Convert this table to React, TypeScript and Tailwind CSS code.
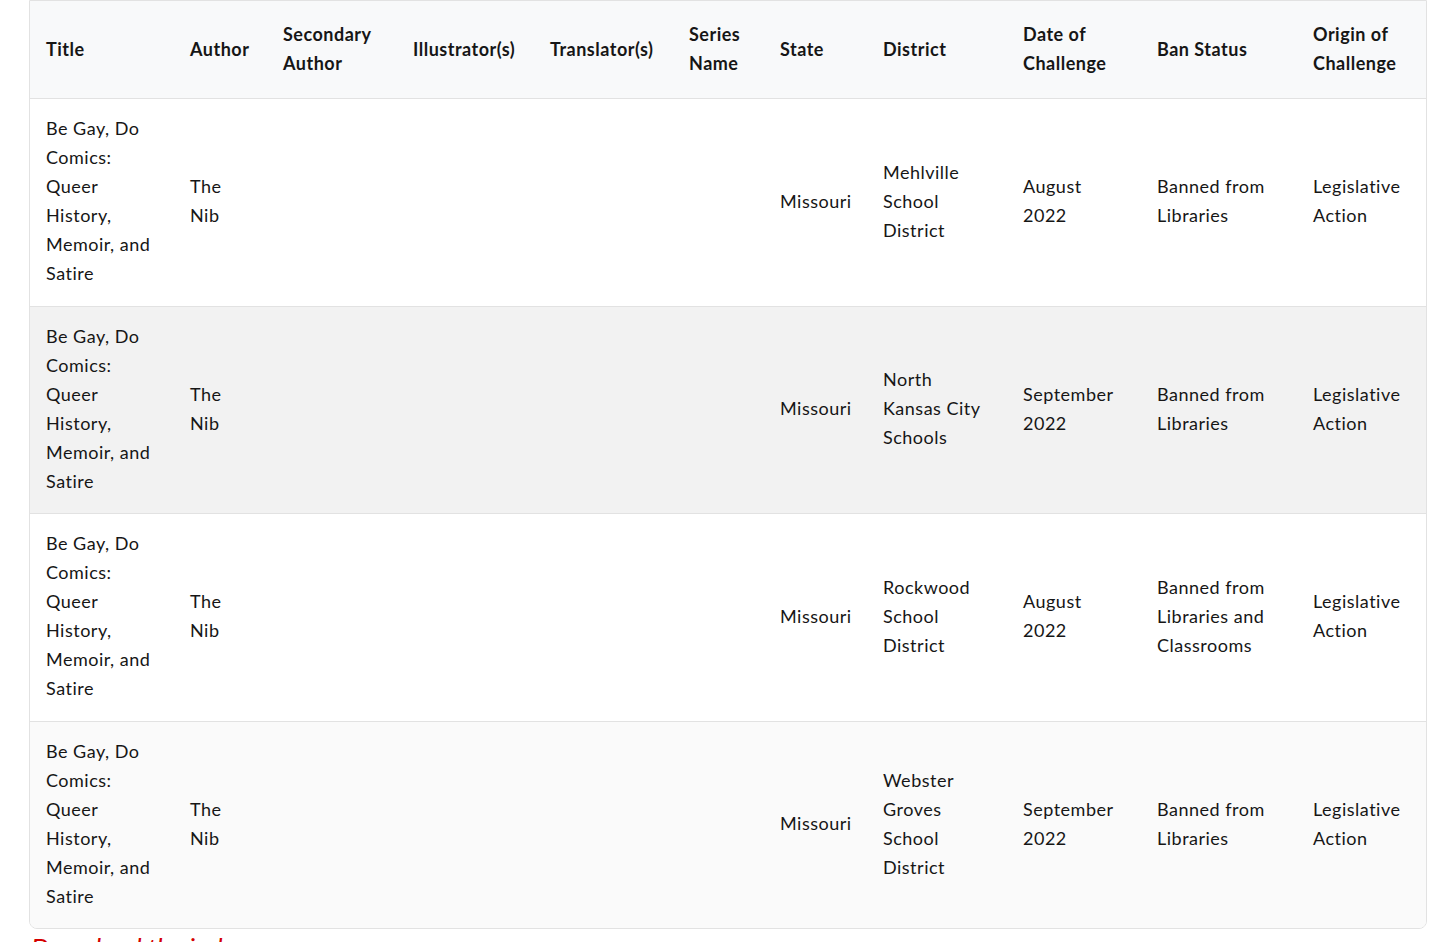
import React from 'react';

interface Row {
  district: string;
  date: string;
  status: string;
  bg: string;
}

const rows: Row[] = [
  { district: 'Mehlville School District', date: 'August 2022', status: 'Banned from Libraries', bg: 'bg-white' },
  { district: 'North Kansas City Schools', date: 'September 2022', status: 'Banned from Libraries', bg: 'bg-[#f2f2f2]' },
  { district: 'Rockwood School District', date: 'August 2022', status: 'Banned from Libraries and Classrooms', bg: 'bg-white' },
  { district: 'Webster Groves School District', date: 'September 2022', status: 'Banned from Libraries', bg: 'bg-[#fafafa]' },
];

const headers = [
  'Title',
  'Author',
  'Secondary Author',
  'Illustrator(s)',
  'Translator(s)',
  'Series Name',
  'State',
  'District',
  'Date of Challenge',
  'Ban Status',
  'Origin of Challenge',
];

const cell = 'px-4 pt-[15px] pb-[17.5px] align-middle';

const App: React.FC = () => {
  return (
    <div className="min-h-screen bg-white px-[29px] font-['Lato',sans-serif] text-[18px] leading-[29px] tracking-[0.5px] text-[#161616]">
      <div className="w-[1398px] overflow-hidden rounded-b-lg border border-[#e2e2e2]">
        <table className="w-full table-fixed border-collapse text-left">
          <colgroup>
            <col className="w-[144px]" />
            <col className="w-[93px]" />
            <col className="w-[130px]" />
            <col className="w-[137px]" />
            <col className="w-[139px]" />
            <col className="w-[91px]" />
            <col className="w-[103px]" />
            <col className="w-[140px]" />
            <col className="w-[134px]" />
            <col className="w-[156px]" />
            <col />
          </colgroup>
          <thead>
            <tr className="bg-[#f8f9fa]">
              {headers.map((h) => (
                <th key={h} className="px-4 pt-[19px] pb-[20px] align-middle font-bold">
                  {h}
                </th>
              ))}
            </tr>
          </thead>
          <tbody>
            {rows.map((r) => (
              <tr key={r.district} className={`${r.bg} border-t border-[#e2e2e2]`}>
                <td className={cell}>Be Gay, Do Comics: Queer History, Memoir, and Satire</td>
                <td className={cell}>The Nib</td>
                <td className="px-4" />
                <td className="px-4" />
                <td className="px-4" />
                <td className="px-4" />
                <td className={cell}>Missouri</td>
                <td className={cell}>{r.district}</td>
                <td className={cell}>{r.date}</td>
                <td className={cell}>{r.status}</td>
                <td className={cell}>Legislative Action</td>
              </tr>
            ))}
          </tbody>
        </table>
      </div>
      <p className="pl-[2px] text-[26px] italic leading-[36px] tracking-normal text-[#d40000]">Download the index</p>
    </div>
  );
};

export default App;
